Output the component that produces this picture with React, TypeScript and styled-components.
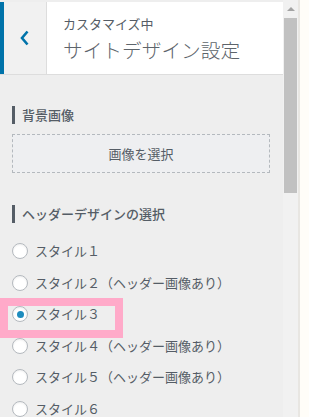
import React from "react";
import styled, { createGlobalStyle } from "styled-components";

const Global = createGlobalStyle`
  html, body { margin: 0; padding: 0; }
  body {
    width: 309px;
    height: 417px;
    overflow: hidden;
    background: #fffdf8;
    font-family: "Noto Sans CJK JP", "Noto Sans", sans-serif;
  }
`;

const Frame = styled.div`
  display: flex;
  width: 309px;
  height: 417px;
`;

const Panel = styled.div`
  position: relative;
  width: 283px;
  height: 417px;
  overflow: hidden;
  background: #eeeeee;
  padding-top: 2px;
  box-sizing: border-box;
`;

const Scrollbar = styled.div`
  width: 15px;
  height: 417px;
  background: #f1f1f1;
  display: flex;
  flex-direction: column;
  align-items: center;
  border-right: 2px solid #e8e6e2;
`;

const ArrowUp = styled.div`
  width: 0;
  height: 0;
  margin-top: 7px;
  border-left: 4px solid transparent;
  border-right: 4px solid transparent;
  border-bottom: 4px solid #a3a3a3;
`;

const Thumb = styled.div`
  width: 13px;
  height: 175px;
  margin-top: 7px;
  background: #c1c1c1;
`;

const Header = styled.div`
  display: flex;
  height: 72px;
  background: #fff;
  border-bottom: 1px solid #dddddd;
`;

const BlueBar = styled.div`
  width: 4px;
  background: #0073aa;
`;

const BackButton = styled.div`
  width: 42px;
  background: #f1f1f1;
  border-right: 1px solid #dddddd;
  display: flex;
  align-items: center;
  justify-content: center;
`;

const TitleBox = styled.div`
  display: flex;
  flex-direction: column;
  padding-left: 16px;
  padding-top: 13px;
`;

const Action = styled.div`
  font-size: 13px;
  line-height: 18px;
  color: #555d66;
`;

const Title = styled.div`
  font-size: 19.7px;
  line-height: 26px;
  margin-top: 4px;
  color: #5d646b;
  font-weight: 300;
`;

const Section = styled.div<{ $top: number }>`
  padding: ${(p) => p.$top}px 13px 0 12px;
`;

const Heading = styled.div`
  border-left: 3px solid #555d66;
  padding-left: 7px;
  height: 18px;
  font-size: 13px;
  line-height: 18px;
  font-weight: 500;
  color: #555d66;
`;

const SelectBox = styled.div`
  margin-top: 10px;
  height: 39px;
  box-sizing: border-box;
  border: 1px dashed #b4b9be;
  background: #eeeff1;
  display: flex;
  align-items: center;
  justify-content: center;
  font-size: 13px;
  color: #555d66;
`;

const RadioList = styled.div`
  margin-top: 20px;
  display: flex;
  flex-direction: column;
`;

const RadioRow = styled.label`
  display: flex;
  align-items: flex-start;
  height: 31.6px;
  font-size: 13px;
  line-height: 16px;
  color: #555d66;
`;

const RadioCircle = styled.span<{ $checked?: boolean }>`
  width: 16px;
  height: 16px;
  box-sizing: border-box;
  border-radius: 50%;
  border: 1px solid #b4b9be;
  background: #fff;
  box-shadow: inset 0 1px 2px rgba(0, 0, 0, 0.07);
  display: flex;
  align-items: center;
  justify-content: center;
  margin-right: 7px;
  flex-shrink: 0;
  &::after {
    content: "";
    display: ${(p) => (p.$checked ? "block" : "none")};
    width: 7px;
    height: 7px;
    border-radius: 50%;
    background: #1e8cbe;
  }
`;

const Highlight = styled.div`
  position: absolute;
  left: 0;
  top: 298px;
  width: 123px;
  height: 40px;
  box-sizing: border-box;
  border: 8px solid #ffaac9;
  pointer-events: none;
`;

const styles = [
  "スタイル１",
  "スタイル２（ヘッダー画像あり）",
  "スタイル３",
  "スタイル４（ヘッダー画像あり）",
  "スタイル５（ヘッダー画像あり）",
  "スタイル６",
];

export default function App() {
  return (
    <>
      <Global />
      <Frame>
        <Panel>
          <Header>
            <BlueBar />
            <BackButton>
              <svg width="10" height="16" viewBox="0 0 10 16">
                <path
                  d="M7.5 1.5 L2 8 L7.5 14.5"
                  fill="none"
                  stroke="#0073aa"
                  strokeWidth="2.6"
                />
              </svg>
            </BackButton>
            <TitleBox>
              <Action>カスタマイズ中</Action>
              <Title>サイトデザイン設定</Title>
            </TitleBox>
          </Header>
          <Section $top={31}>
            <Heading>背景画像</Heading>
            <SelectBox>画像を選択</SelectBox>
          </Section>
          <Section $top={32}>
            <Heading>ヘッダーデザインの選択</Heading>
            <RadioList>
              {styles.map((s, i) => (
                <RadioRow key={s}>
                  <RadioCircle $checked={i === 2} />
                  {s}
                </RadioRow>
              ))}
            </RadioList>
          </Section>
          <Highlight />
        </Panel>
        <Scrollbar>
          <ArrowUp />
          <Thumb />
        </Scrollbar>
      </Frame>
    </>
  );
}
